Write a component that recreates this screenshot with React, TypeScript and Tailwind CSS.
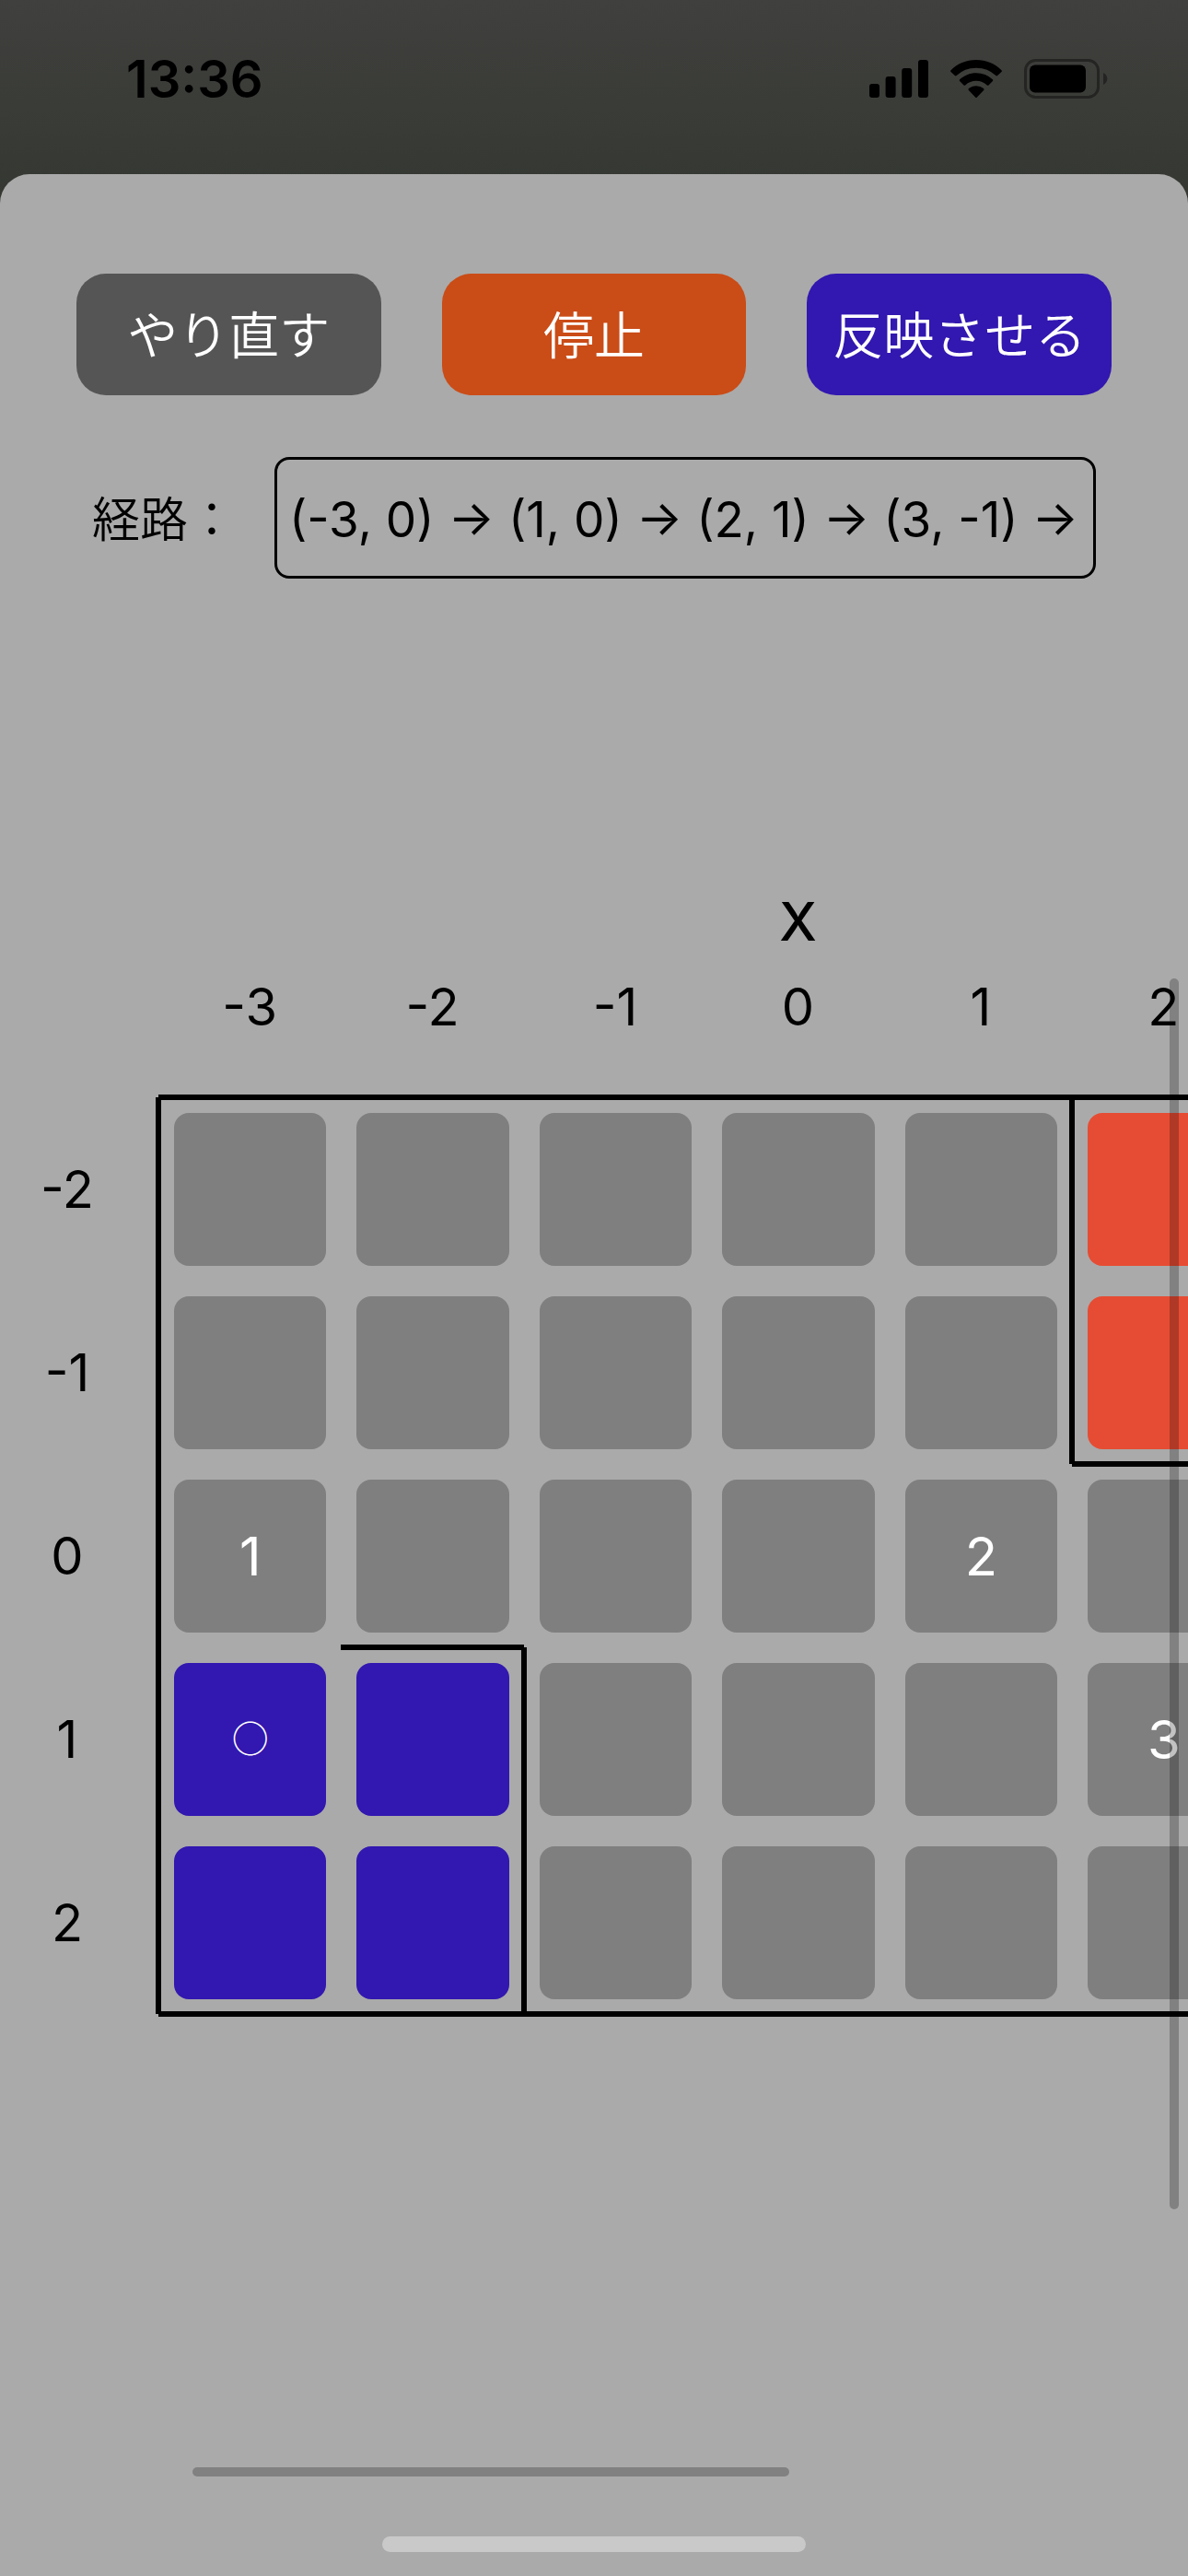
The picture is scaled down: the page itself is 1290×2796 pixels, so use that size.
type Kind = 'plain' | 'start' | 'goal';

const COLUMNS = [-3, -2, -1, 0, 1, 2, 3];
const ROWS = [-2, -1, 0, 1, 2];

const MARKS: Record<string, string> = {
  '-3,0': '1',
  '1,0': '2',
  '2,1': '3',
  '3,-1': '4',
  '-3,1': '○',
};

const TILE_COLOURS: Record<Kind, string> = {
  plain: 'bg-[#7f7f7f]',
  start: 'bg-[#3217b0]',
  goal: 'bg-[#e64c33]',
};

function kindOf(x: number, y: number): Kind {
  if (x <= -2 && y >= 1) return 'start';
  if (x >= 2 && y <= -1) return 'goal';
  return 'plain';
}

function Walls({ x, y }: { x: number; y: number }) {
  const top = y === -2 || (x === -2 && y === 1);
  const bottom = y === 2 || (x >= 2 && y === -1);
  const left = x === -3 || (x === 2 && y <= -1);
  const right = x === 3 || (x === -2 && y >= 1);
  return (
    <>
      {top && <span className="absolute inset-x-0 -top-[3px] z-10 h-[6px] bg-black" />}
      {bottom && <span className="absolute inset-x-0 -bottom-[3px] z-10 h-[6px] bg-black" />}
      {left && <span className="absolute inset-y-0 -left-[3px] z-10 w-[6px] bg-black" />}
      {right && <span className="absolute inset-y-0 -right-[3px] z-10 w-[6px] bg-black" />}
    </>
  );
}

function StatusBar() {
  return (
    <header className="flex h-[225px] items-start justify-between bg-linear-to-b from-[#40403e] to-[#343831] pr-[87px] pl-[137px] pt-[53px]">
      <time className="text-[56px] leading-[66px] font-semibold">13:36</time>
      <div className="flex items-center gap-6 pt-[11px]">
        <svg width="64" height="43" viewBox="0 0 64 43" aria-label="電波">
          <rect x="0" y="27" width="11" height="15" rx="3" />
          <rect x="17.6" y="19" width="11" height="23" rx="3" />
          <rect x="35.2" y="10" width="11" height="32" rx="3" />
          <rect x="53" y="1" width="11" height="41" rx="3" />
        </svg>
        <svg width="56" height="43" viewBox="0 0 56 43" aria-label="Wi-Fi">
          <path d="M28 1C17.200 1 7.300 5.300 0.500 12.200a1.200 1.200 0 0 0 0 1.700L4.900 18a1.200 1.200 0 0 0 1.700 0A31 31 0 0 1 28 9.700 31 31 0 0 1 49.400 18a1.200 1.200 0 0 0 1.700 0l4.400-4.100a1.200 1.200 0 0 0 0-1.700C48.700 5.300 38.800 1 28 1Z" />
          <path d="M28 15.200c-6.900 0-13.200 2.700-17.900 7.100a1.200 1.200 0 0 0 0 1.700l4.400 4.400a1.200 1.200 0 0 0 1.700 0A17.400 17.400 0 0 1 28 23.800c4.600 0 8.700 1.700 11.800 4.600a1.200 1.200 0 0 0 1.700 0l4.400-4.400a1.200 1.200 0 0 0 0-1.700A26 26 0 0 0 28 15.200Z" />
          <path d="M28 29.200c-3.100 0-5.900 1.100-8.100 2.900a1.200 1.200 0 0 0 0 1.800l7.200 7.700a1.200 1.200 0 0 0 1.800 0l7.200-7.700a1.200 1.200 0 0 0 0-1.800A12.800 12.800 0 0 0 28 29.200Z" />
        </svg>
        <svg width="91" height="43" viewBox="0 0 91 43" aria-label="バッテリー">
          <rect x="1.500" y="1.500" width="79" height="40" rx="11" fill="none" stroke="#242522" strokeWidth="3" />
          <rect x="6" y="6.500" width="61" height="30" rx="6" />
          <path d="M86 15c2.700 1.200 4.300 3.700 4.300 6.500S88.700 26.800 86 28Z" fill="#242522" />
        </svg>
      </div>
    </header>
  );
}

function Actions() {
  return (
    <div className="flex gap-[66px] px-[83px] font-['Noto_Sans_CJK_JP',sans-serif] font-[350] text-white">
      <button type="button" className="h-[132px] flex-1 rounded-[32px] bg-[#555555] pb-[6px] text-[55px] leading-none whitespace-nowrap">
        やり直す
      </button>
      <button type="button" className="h-[132px] flex-1 rounded-[32px] bg-[#ca4c17] pb-[6px] text-[55px] leading-none whitespace-nowrap">
        停止
      </button>
      <button type="button" className="h-[132px] flex-1 rounded-[32px] bg-[#3217b0] pb-[6px] text-[55px] leading-none whitespace-nowrap">
        反映させる
      </button>
    </div>
  );
}

function Route() {
  return (
    <div className="mt-[67px] flex items-center px-[100px]">
      <label
        htmlFor="route"
        className="w-[198px] shrink-0 pb-[2px] font-['Noto_Sans_CJK_JP',sans-serif] text-[52px] leading-none font-[350] whitespace-nowrap"
      >
        経路：
      </label>
      <input
        id="route"
        readOnly
        value="(-3, 0) → (1, 0) → (2, 1) → (3, -1) →"
        className="h-[132px] min-w-0 flex-1 rounded-[16px] border-[3px] border-black px-[13px] pt-1 text-[53px]"
      />
    </div>
  );
}

function Board() {
  return (
    <table className="w-[1561px] table-fixed border-separate border-spacing-0">
      <colgroup>
        <col className="w-[172px]" />
      </colgroup>
      <thead>
        <tr>
          <td />
          <th colSpan={7} scope="colgroup" className="h-[80px] p-0 text-[58px] leading-none font-medium">
            X
          </th>
        </tr>
        <tr>
          <td />
          {COLUMNS.map((x) => (
            <th key={x} scope="col" className="h-[151px] p-0 pb-[45px] text-[56px] leading-none font-normal">
              {x}
            </th>
          ))}
        </tr>
      </thead>
      <tbody>
        {ROWS.map((y) => (
          <tr key={y}>
            <th scope="row" className="h-[199px] p-0 pr-[26px] text-[56px] leading-none font-normal">
              {y}
            </th>
            {COLUMNS.map((x) => {
              const mark = MARKS[`${x},${y}`];
              return (
                <td key={x} className="relative h-[199px] p-0 pr-4 pl-[17px]">
                  <Walls x={x} y={y} />
                  <button
                    type="button"
                    aria-label={`${x}, ${y}`}
                    className={`flex h-[166px] w-full items-center justify-center rounded-[16px] text-white ${TILE_COLOURS[kindOf(x, y)]}`}
                  >
                    <span
                      className={
                        mark === '○'
                          ? "pb-[6px] font-['Noto_Sans_CJK_JP',sans-serif] text-[40px] leading-none font-normal"
                          : 'text-[58px] leading-none'
                      }
                    >
                      {mark}
                    </span>
                  </button>
                </td>
              );
            })}
          </tr>
        ))}
      </tbody>
    </table>
  );
}

export default function App() {
  return (
    <div className="flex min-h-screen flex-col overflow-hidden bg-[#aaaaaa] font-['Inter','Noto_Sans_CJK_JP',sans-serif] text-black">
      <StatusBar />
      <main className="relative -mt-9 flex flex-1 flex-col rounded-t-[32px] bg-[#aaaaaa] pt-[108px]">
        <Actions />
        <Route />
        <section aria-label="盤面" className="relative mt-[332px] flex-1">
          <div className="overflow-x-auto pb-[3px] [scrollbar-width:none]">
            <Board />
          </div>
          <div className="absolute top-[102px] right-[10px] z-20 h-[1336px] w-[10px] rounded-full bg-black/24" />
          <div className="absolute bottom-[108px] left-[209px] h-[10px] w-[648px] rounded-full bg-black/24" />
          <div className="absolute bottom-[26px] left-1/2 h-[17px] w-[460px] -translate-x-1/2 rounded-full bg-[#c9c9c9]" />
        </section>
      </main>
    </div>
  );
}
